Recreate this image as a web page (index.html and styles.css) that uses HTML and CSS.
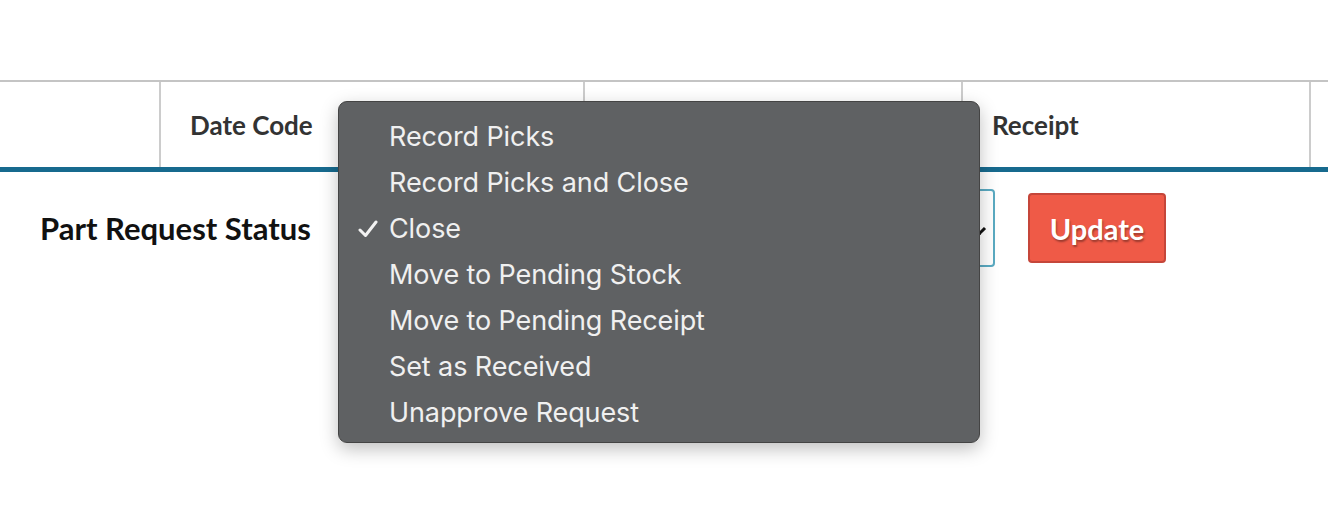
FILE: index.html
```html
<!DOCTYPE html>
<html>
<head>
<meta charset="utf-8">
<link rel="stylesheet" href="styles.css">
</head>
<body>
<div class="page">
  <div class="table-head">
    <div class="th c1"></div>
    <div class="th c2">Date Code</div>
    <div class="th c3"></div>
    <div class="th c4">Receipt</div>
    <div class="th c5"></div>
  </div>
  <div class="status-row">
    <div class="label">Part Request Status</div>
    <div class="select"><span class="arrow"></span></div>
    <button class="update">Update</button>
  </div>
  <div class="menu">
    <div class="item">Record Picks</div>
    <div class="item">Record Picks and Close</div>
    <div class="item checked"><svg class="check" width="20" height="18" viewBox="0 0 20 18"><path d="M2 10 L7.5 15.5 L18 2" fill="none" stroke="#f2f2f2" stroke-width="3" stroke-linecap="round" stroke-linejoin="round"/></svg>Close</div>
    <div class="item">Move to Pending Stock</div>
    <div class="item">Move to Pending Receipt</div>
    <div class="item">Set as Received</div>
    <div class="item">Unapprove Request</div>
  </div>
</div>
</body>
</html>
```
FILE: styles.css
```css
html, body {
  margin: 0;
  padding: 0;
  background: #fff;
}
.page {
  position: relative;
  width: 1328px;
  height: 510px;
  overflow: hidden;
  padding-top: 80px;
  box-sizing: border-box;
}
.table-head {
  display: flex;
  height: 92px;
  border-top: 2px solid #c4c4c4;
  border-bottom: 5px solid #176a8e;
  box-sizing: border-box;
}
.th {
  flex: none;
  box-sizing: border-box;
  border-right: 2px solid #cccccc;
  font-family: "Lato", sans-serif;
  font-weight: 700;
  font-size: 26px;
  color: #333;
  display: flex;
  align-items: center;
  padding-left: 29px;
}
.c1 { width: 161px; }
.c2 { width: 424px; }
.c3 { width: 378px; }
.c4 { width: 348px; }
.c5 { flex: 1; border-right: none; }
.status-row {
  display: flex;
  align-items: center;
  height: 78px;
  margin-top: 17px;
}
.label {
  font-family: "Lato", sans-serif;
  font-weight: 700;
  font-size: 31px;
  color: #111;
  margin-left: 40px;
  width: 300px;
  flex: none;
  white-space: nowrap;
}
.select {
  position: relative;
  flex: none;
  width: 655px;
  height: 78px;
  box-sizing: border-box;
  border: 2px solid #5aaac2;
  border-radius: 4px;
}
.arrow {
  position: absolute;
  right: 9px;
  top: 33px;
  width: 7px;
  height: 7px;
  border-right: 3px solid #111;
  border-bottom: 3px solid #111;
  transform: rotate(45deg);
}
.update {
  flex: none;
  margin-left: 33px;
  width: 138px;
  height: 70px;
  background: #ef5a47;
  border: 2px solid #c5463a;
  border-radius: 4px;
  color: #fff;
  font-family: "Lato", sans-serif;
  font-weight: 700;
  font-size: 29px;
  text-shadow: 1px 2px 2px rgba(0,0,0,0.35);
  padding: 0;
}
.menu {
  position: absolute;
  left: 338px;
  top: 101px;
  width: 642px;
  height: 342px;
  box-sizing: border-box;
  background: #5f6163;
  border: 1px solid #444;
  border-radius: 9px;
  box-shadow: 0 6px 18px rgba(0,0,0,0.25);
  padding-top: 12px;
}
.item {
  position: relative;
  height: 46px;
  line-height: 46px;
  padding-left: 50px;
  font-family: "Inter", sans-serif;
  font-size: 27px;
  letter-spacing: -0.1px;
  color: #f0f0f0;
}
.check {
  position: absolute;
  left: 19px;
  top: 14px;
}
```
